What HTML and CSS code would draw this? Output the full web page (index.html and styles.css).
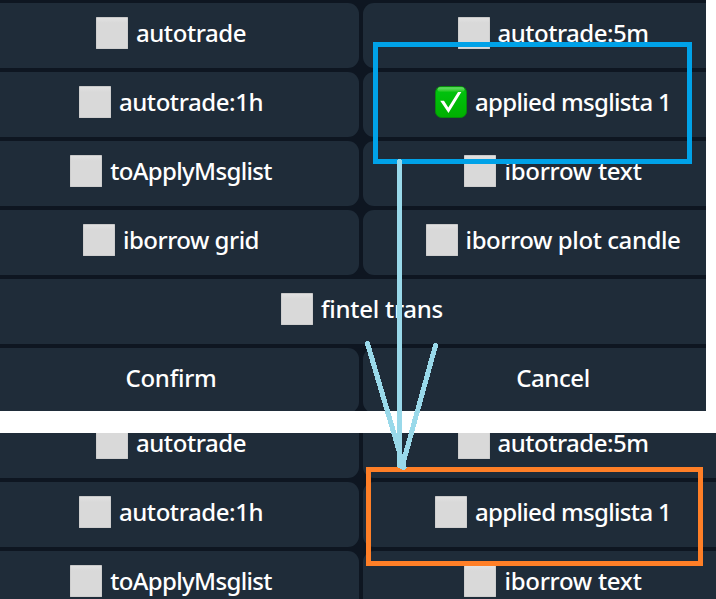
FILE: index.html
```
<!DOCTYPE html>
<html lang="en">
<head>
<meta charset="utf-8">
<title>Message options</title>
<link rel="stylesheet" href="styles.css">
</head>
<body>
<main class="page">
  <section class="panel panel-before">
    <div class="keyboard">
      <div class="key"><i class="box"></i><span>autotrade</span></div>
      <div class="key"><i class="box"></i><span class="snug">autotrade:5m</span></div>
      <div class="key"><i class="box"></i><span>autotrade:1h</span></div>
      <div class="key"><svg class="check" viewBox="0 0 32 32"><defs><linearGradient id="g" x1="0" y1="0" x2="0" y2="1"><stop offset="0" stop-color="#6fdc6f"/><stop offset="1" stop-color="#1cc81c"/></linearGradient><linearGradient id="b" x1="0" y1="0" x2="0" y2="1"><stop offset="0" stop-color="#00c510"/><stop offset="1" stop-color="#00b000"/></linearGradient></defs><rect x=".5" y=".5" width="31" height="31" rx="6" fill="url(#b)" stroke="#078a0b"/><rect x="2.5" y="1.2" width="27" height="4.6" rx="2.3" fill="url(#g)"/><path d="M5.2 14.8h3.8l4.3 6.6L23 6h3.4L13.5 27z" fill="#fff"/></svg><span class="tight">applied msglista 1</span></div>
      <div class="key"><i class="box"></i><span class="tight">toApplyMsglist</span></div>
      <div class="key"><i class="box"></i><span class="loose">iborrow text</span></div>
      <div class="key"><i class="box"></i><span class="snug">iborrow grid</span></div>
      <div class="key"><i class="box"></i><span>iborrow plot candle</span></div>
      <div class="key wide"><i class="box"></i><span class="loose">fintel trans</span></div>
      <div class="key"><span class="loose">Confirm</span></div>
      <div class="key"><span>Cancel</span></div>
    </div>
  </section>
  <section class="panel panel-after">
    <div class="keyboard">
      <div class="key"><i class="box"></i><span>autotrade</span></div>
      <div class="key"><i class="box"></i><span class="snug">autotrade:5m</span></div>
      <div class="key"><i class="box"></i><span>autotrade:1h</span></div>
      <div class="key"><i class="box"></i><span class="tight">applied msglista 1</span></div>
      <div class="key"><i class="box"></i><span class="tight">toApplyMsglist</span></div>
      <div class="key"><i class="box"></i><span class="loose">iborrow text</span></div>
    </div>
  </section>
  <svg class="marks" viewBox="0 0 716 599">
    <rect x="375.5" y="44.5" width="314" height="117" stroke="#00a2e8"/>
    <rect x="368.5" y="469.5" width="332" height="94" stroke="#ff7f27"/>
    <path d="M399.5 161.5V465.5M367.5 343.5L404 467.5M435.5 345.5L402 467" stroke="#99d9ea" stroke-linecap="round"/>
  </svg>
</main>
</body>
</html>
```
FILE: styles.css
```
body {
  margin: 0;
  background: #fff;
}
.page {
  position: relative;
  width: 716px;
  height: 599px;
  overflow: hidden;
  display: flex;
  flex-direction: column;
  gap: 22px;
}
.panel {
  background: #0e1621;
  overflow: hidden;
  box-sizing: border-box;
}
.panel-before {
  width: 706px;
  height: 411px;
  padding-top: 3px;
}
.panel-after {
  height: 166px;
}
.panel-after .keyboard {
  margin-top: -20px;
}
.keyboard {
  display: grid;
  grid-template-columns: 378px 378px;
  grid-auto-rows: 65px;
  gap: 4px;
  width: 760px;
  margin-left: -19px;
}
.key {
  display: flex;
  align-items: center;
  justify-content: center;
  gap: 8px;
  padding-bottom: 5px;
  padding-left: 2px;
  box-sizing: border-box;
  border-radius: 11px;
  background: #1f2c39;
  color: #fff;
  font: 500 24px/30px "Noto Sans", sans-serif;
  letter-spacing: -0.42px;
  white-space: nowrap;
}
.loose {
  letter-spacing: -0.27px;
}
.snug {
  letter-spacing: -0.5px;
}
.tight {
  letter-spacing: -0.66px;
}
.wide {
  grid-column: span 2;
}
.box {
  width: 32px;
  height: 32px;
  box-sizing: border-box;
  border: 1px solid #cecece;
  border-top-color: #c8c8c8;
  border-radius: 1px;
  background: linear-gradient(#e1e1e1, #d9d9d9 5px);
}
.check {
  width: 32px;
  height: 32px;
}
.marks {
  position: absolute;
  inset: 0;
  width: 716px;
  height: 599px;
  fill: none;
  stroke-width: 5;
  shape-rendering: crispEdges;
}
```
